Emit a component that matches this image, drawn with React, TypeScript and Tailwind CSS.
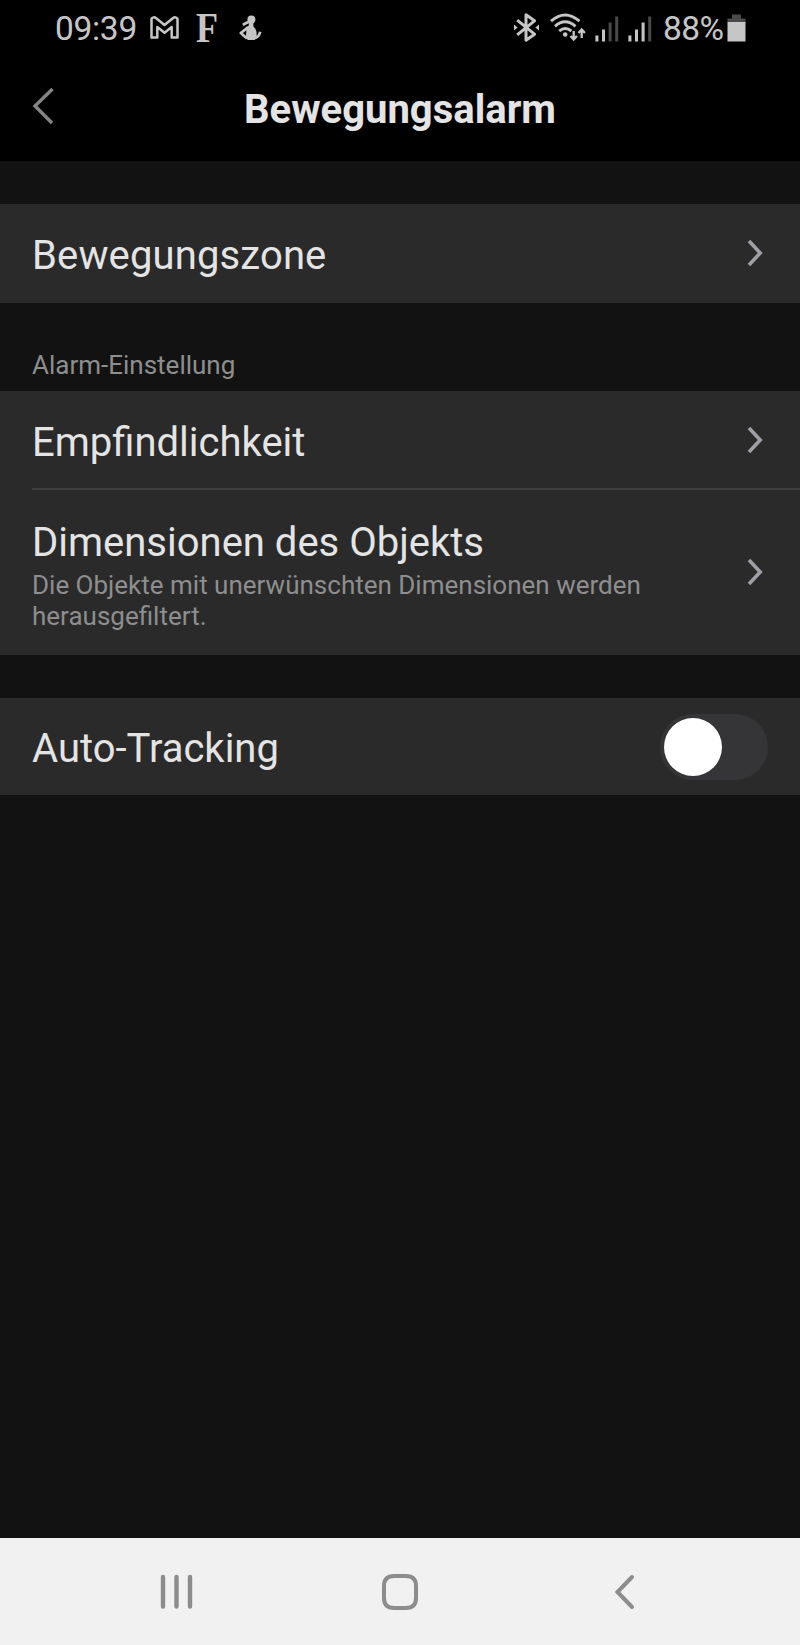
import type { ReactNode } from 'react';

interface RowProps {
  title: string;
  className: string;
  children: ReactNode;
}

function ChevronRight() {
  return (
    <svg className="mr-[36px] mb-[2px] shrink-0" width="18" height="28" viewBox="0 0 18 28" fill="none" stroke="#a09fa8" strokeWidth="3.6">
      <path d="M3 2 14.2 14 3 26" />
    </svg>
  );
}

function Row({ title, className, children }: RowProps) {
  return (
    <div className={`flex items-center justify-between bg-[#2a2a2a] pl-8 ${className}`}>
      <span className="pt-[5px] text-[40px] leading-[46px] text-[#e4e4e4]">{title}</span>
      {children}
    </div>
  );
}

function SignalBars({ active }: { active: number }) {
  return (
    <svg width="24" height="26" viewBox="0 0 24 26">
      {[6, 12, 19, 25].map((h, i) => (
        <rect key={h} x={i * 6.6 + 0.4} y={25.5 - h} width="3" height={h} fill={i < active ? '#c6c6c6' : '#4a4a4a'} />
      ))}
    </svg>
  );
}

function StatusBar() {
  return (
    <div className="flex h-[58px] items-center pl-[55px] text-[#c6c6c6]">
      <span className="w-[82px] text-[33.5px] leading-10 tracking-[-0.3px]">09:39</span>

      <svg className="ml-[13px] mt-[-4px]" width="29" height="23" viewBox="0 0 29 23" fill="none" stroke="currentColor" strokeWidth="2.5" strokeLinejoin="round">
        <path d="M1.5 21.5V2.8Q3.5.2 6.2 2.3L14.5 9l8.3-6.7Q25.5.2 27.5 2.8v18.7h-5.8V11l-7.2 5.7L7.3 11v10.5Z" />
      </svg>

      <span className="ml-[17px] w-[22px] origin-left scale-x-[0.84] pb-[2px] font-['Liberation_Serif',serif] text-[43px] leading-10 font-bold">F</span>

      <svg className="ml-[21px] mt-[-2px]" width="23" height="26" viewBox="0 0 23 26" fill="currentColor">
        <circle cx="12.4" cy="4.6" r="4" />
        <path d="M9.8 7h4.6v4.4c2.6 2.4 3.6 5.4 3.2 9.4L15.5 25H8.6L7 21l.6-9 2.2-1.6Z" />
        <path d="m3.8 9.8 6-3M9 12.4 1.8 18 8 23.4M15 23.4q5-.8 6.2-6.6" fill="none" stroke="currentColor" strokeWidth="2.7" strokeLinejoin="round" />
      </svg>

      <div className="ml-auto flex items-center pr-[54px]">
        <svg className="mt-[-3px] mr-[1px]" width="26" height="29" viewBox="0 0 26 29" fill="none" stroke="currentColor" strokeWidth="3" strokeLinejoin="round">
          <path d="m3.2 7.2 17.3 14-8.5 6V1.8l8.5 6-17.3 14" />
          <path d="m0 11.5 3.6 3-3.6 3ZM25 11.5l-3.6 3 3.6 3Z" fill="currentColor" stroke="none" />
        </svg>

        <svg className="ml-[9px] mr-[1px] mt-[-3px]" width="36" height="29" viewBox="0 0 36 29" fill="none" stroke="currentColor" strokeWidth="2.9">
          <path d="M1 8.2q14-12.6 28.5 0M5 13.3q10-9 20.5 0M9.2 18q6-5 12.2 0" />
          <circle cx="15.2" cy="21.5" r="2.3" fill="currentColor" stroke="none" />
          <path d="M23.7 18v8M20.5 23l3.2 3.5 3.2-3.5M31.7 25v-8M28.5 20l3.2-3.5 3.2 3.5" strokeWidth="2.3" />
        </svg>

        <div className="ml-2 flex gap-[9px]">
          <SignalBars active={2} />
          <SignalBars active={3} />
        </div>

        <span className="ml-[11px] w-[60px] text-[33.5px] leading-10 tracking-[-0.6px]">88%</span>

        <svg className="ml-[4px] mt-[-3px]" width="19" height="28" viewBox="0 0 19 28">
          <path d="M5 .5h9v4h4.5v4H.5v-4H5Z" fill="#4a4a4a" />
          <path d="M.5 8h18v19.5H.5Z" fill="currentColor" />
        </svg>
      </div>
    </div>
  );
}

function NavBar() {
  return (
    <div className="flex h-[107px] items-center bg-[#f1f1f1] text-[#8c8c8c]">
      <svg className="ml-[160px]" width="33" height="36" viewBox="0 0 33 36" stroke="currentColor" strokeWidth="4.4" strokeLinecap="round">
        <path d="M3 3v29.5M16.5 3v29.5M30 3v29.5" />
      </svg>
      <svg className="ml-[189px]" width="36" height="36" viewBox="0 0 36 36" fill="none" stroke="currentColor" strokeWidth="4">
        <path d="M12 2h12q10 0 10 10v12q0 10-10 10H12Q2 34 2 24V12Q2 2 12 2Z" />
      </svg>
      <svg className="ml-[196px]" width="22" height="36" viewBox="0 0 22 36" fill="none" stroke="currentColor" strokeWidth="4" strokeLinecap="round">
        <path d="M18 3 3.5 18 18 33" />
      </svg>
    </div>
  );
}

export default function App() {
  return (
    <div className="flex h-[1645px] w-[800px] flex-col bg-[#121212] font-[Roboto,sans-serif]">
      <header className="h-[161px] bg-black">
        <StatusBar />
        <div className="flex h-[103px] items-center">
          <svg className="mb-[8px] ml-8 shrink-0" width="24" height="38" viewBox="0 0 24 38" fill="none" stroke="#858585" strokeWidth="3.4">
            <path d="M20.5 2 3 19l17 17" />
          </svg>
          <h1 className="mr-14 flex-1 text-center text-[40px] leading-[46px] font-bold text-[#e4e4e4]">Bewegungsalarm</h1>
        </div>
      </header>

      <main className="flex-1">
        <Row title="Bewegungszone" className="mt-[43px] h-[99px] tracking-[0.13px]">
          <ChevronRight />
        </Row>

        <h2 className="h-[88px] pt-[47px] pl-8 text-[26px] leading-[30px] text-[#8e8e8e]">Alarm-Einstellung</h2>

        <Row title="Empfindlichkeit" className="h-[99px]">
          <ChevronRight />
        </Row>
        <div className="-mt-[2px] bg-[#2a2a2a] pl-8">
          <div className="h-[2px] bg-[#3e3e3e]" />
        </div>
        <div className="flex h-[165px] items-center justify-between bg-[#2a2a2a] pl-8">
          <div className="w-[640px] pt-[6px]">
            <div className="text-[40px] leading-[46px] text-[#e4e4e4]">Dimensionen des Objekts</div>
            <p className="mt-[4px] text-[26px] leading-[30.5px] text-[#8e8e8e]">
              Die Objekte mit unerwünschten Dimensionen werden herausgefiltert.
            </p>
          </div>
          <ChevronRight />
        </div>

        <Row title="Auto-Tracking" className="mt-[43px] h-[97px]">
          <div className="mr-8 flex h-[66px] w-[108px] items-center rounded-full bg-[#353537] pl-[4px]">
            <div className="size-[58px] rounded-full bg-white" />
          </div>
        </Row>
      </main>

      <NavBar />
    </div>
  );
}
